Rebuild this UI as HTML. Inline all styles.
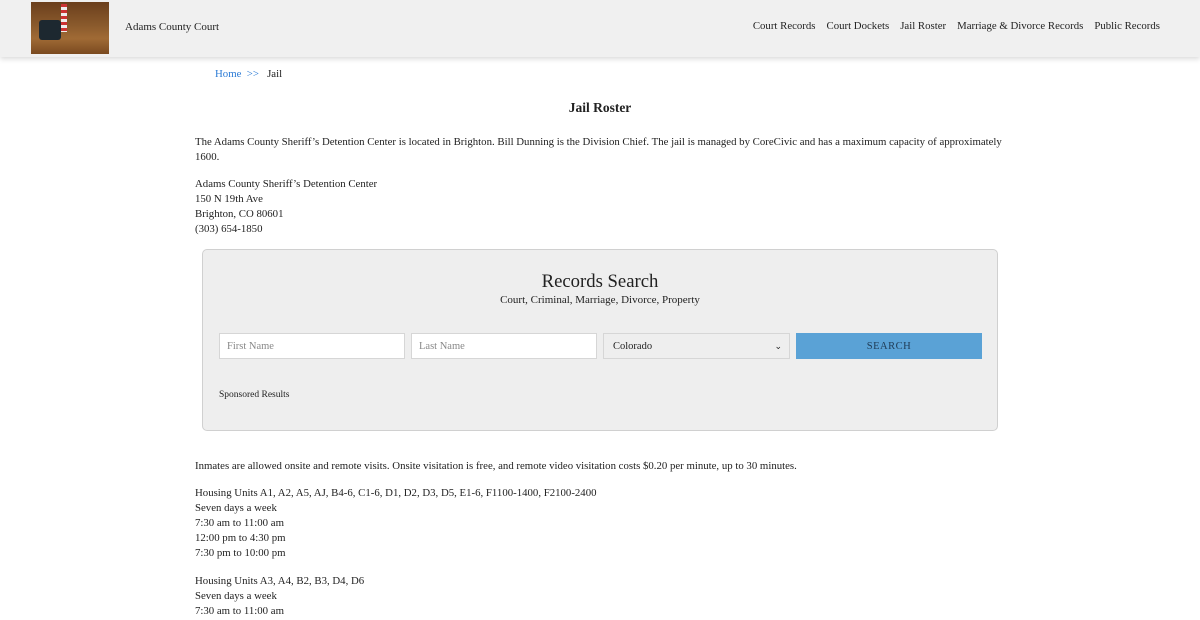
<!DOCTYPE html>
<html><head><meta charset="utf-8"><style>
*{margin:0;padding:0;box-sizing:border-box}
body{width:1200px;height:620px;overflow:hidden;background:#fff;font-family:"Liberation Serif",serif;color:#222;font-size:13px}
.hdr{height:57px;background:#f0f0f0;box-shadow:0 2px 5px rgba(0,0,0,.15);position:relative}
.logo{position:absolute;left:31px;top:2px;width:78px;height:52px;background:linear-gradient(180deg,#6b3f1d 0%,#8a5a2c 45%,#a06a35 70%,#7a4a20 100%)}
.logo:before{content:"";position:absolute;left:8px;top:18px;width:22px;height:20px;background:#1d2830;border-radius:3px}
.logo:after{content:"";position:absolute;left:30px;top:2px;width:6px;height:28px;background:repeating-linear-gradient(180deg,#c33 0 3px,#eee 3px 6px)}
.brand{position:absolute;left:125px;top:21px;font-size:11px}
.nav{position:absolute;right:40px;top:20px;font-size:10.8px}
.nav span{margin-left:11px}
.crumb{position:absolute;left:215px;top:68px;font-size:10.8px}
.crumb a{color:#2a7ad5}
h1{position:absolute;left:0;width:1200px;text-align:center;top:100px;font-size:13.5px;font-weight:bold}
.t{position:absolute;left:195px;width:800px;line-height:15px;font-size:10.8px}
.box{position:absolute;left:202px;top:249px;width:796px;height:182px;background:#eee;border:1px solid #d0d0d0;border-radius:5px}
.box h2{position:absolute;width:100%;text-align:center;top:21px;font-weight:normal;font-size:18.7px}
.box .s{position:absolute;width:100%;text-align:center;top:44px;font-size:11px}
.in{position:absolute;top:83px;height:26px;border:1px solid #d6d6d6;background:#fff;color:#888;font-size:10.5px;padding:7px 7px}
.btn{position:absolute;left:593px;top:83px;width:186px;height:26px;background:#5aa2d6;color:#1f3b55;font-size:10.5px;text-align:center;line-height:28px;letter-spacing:.5px}
.sp{position:absolute;left:16px;top:140px;font-size:9.5px}
</style></head><body>
<div class="hdr"><div class="logo"></div><div class="brand">Adams County Court</div>
<div class="nav"><span>Court Records</span><span>Court Dockets</span><span>Jail Roster</span><span>Marriage &amp; Divorce Records</span><span>Public Records</span></div></div>
<div class="crumb"><a>Home</a> <a>&nbsp;&gt;&gt;</a>&nbsp;&nbsp; Jail</div>
<h1>Jail Roster</h1>
<div class="t" style="top:135px;width:810px">The Adams County Sheriff’s Detention Center is located in Brighton. Bill Dunning is the Division Chief. The jail is managed by CoreCivic and has a maximum capacity of approximately 1600.</div>
<div class="t" style="top:177px">Adams County Sheriff’s Detention Center<br>150 N 19th Ave<br>Brighton, CO 80601<br>(303) 654-1850</div>
<div class="box"><h2>Records Search</h2><div class="s">Court, Criminal, Marriage, Divorce, Property</div>
<div class="in" style="left:16px;width:186px">First Name</div>
<div class="in" style="left:208px;width:186px">Last Name</div>
<div class="in" style="left:400px;width:187px;background:#eee;color:#222;padding-left:9px">Colorado<span style="position:absolute;right:7px;font-size:9px">&#8964;</span></div>
<div class="btn">SEARCH</div>
<div class="sp">Sponsored Results</div></div>
<div class="t" style="top:459px">Inmates are allowed onsite and remote visits. Onsite visitation is free, and remote video visitation costs $0.20 per minute, up to 30 minutes.</div>
<div class="t" style="top:486px">Housing Units A1, A2, A5, AJ, B4-6, C1-6, D1, D2, D3, D5, E1-6, F1100-1400, F2100-2400<br>Seven days a week<br>7:30 am to 11:00 am<br>12:00 pm to 4:30 pm<br>7:30 pm to 10:00 pm</div>
<div class="t" style="top:574px">Housing Units A3, A4, B2, B3, D4, D6<br>Seven days a week<br>7:30 am to 11:00 am</div>
</body></html>
